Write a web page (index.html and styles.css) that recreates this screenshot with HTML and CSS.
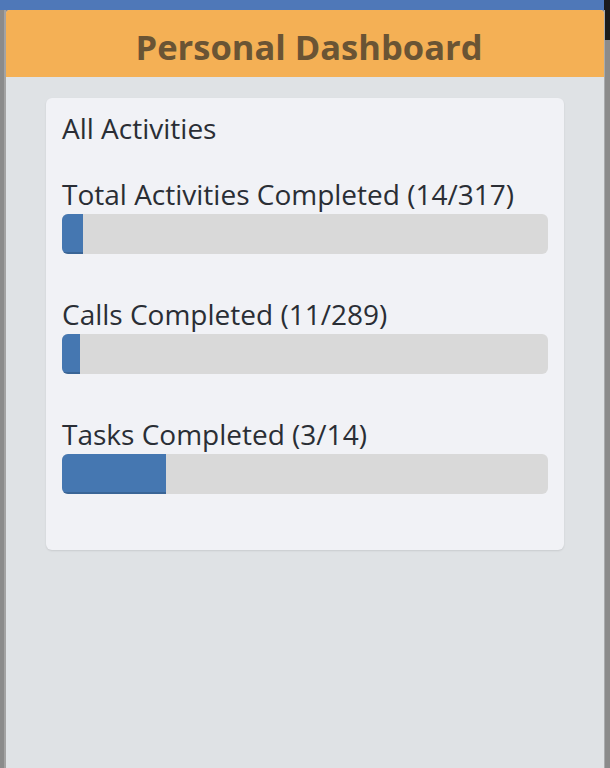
FILE: index.html
```html
<!DOCTYPE html>
<html>
<head>
<meta charset="utf-8">
<link rel="stylesheet" href="styles.css">
</head>
<body>
<div class="topbar"><div class="topbar-blue"></div><div class="topbar-dark"></div></div>
<div class="frame">
  <div class="side-left"></div>
  <main class="panel">
    <header class="header">Personal Dashboard</header>
    <section class="content">
      <div class="card">
        <div class="card-title">All Activities</div>
        <div class="metric">
          <div class="metric-label">Total Activities Completed (14/317)</div>
          <div class="track"><div class="fill" style="width: 4.4%"></div></div>
        </div>
        <div class="metric">
          <div class="metric-label">Calls Completed (11/289)</div>
          <div class="track"><div class="fill" style="width: 3.8%"></div></div>
        </div>
        <div class="metric">
          <div class="metric-label">Tasks Completed (3/14)</div>
          <div class="track"><div class="fill" style="width: 21.4%"></div></div>
        </div>
      </div>
    </section>
  </main>
  <div class="side-right"><div class="side-right-dark"></div></div>
</div>
</body>
</html>
```
FILE: styles.css
```css
html, body {
  margin: 0;
  padding: 0;
  height: 100%;
}
body {
  font-family: "Open Sans", "Noto Sans", sans-serif;
  background: #8b8b8b;
  display: flex;
  flex-direction: column;
  overflow: hidden;
}
.topbar {
  display: flex;
  height: 10px;
  flex: none;
}
.topbar-blue {
  flex: 1;
  background: #4f78b8;
}
.topbar-dark {
  width: 6px;
  background: #1b1b1b;
}
.frame {
  flex: 1;
  display: flex;
}
.side-left {
  width: 4px;
  background: #8b8b8b;
  border-right: 2px solid #a3a3a3;
}
.side-right {
  width: 6px;
  background: #8b8b8b;
  border-left: 1px solid #a9abad;
  box-sizing: border-box;
}
.side-right-dark {
  height: 30px;
  background: #1b1b1b;
}
.panel {
  flex: 1;
  background: #dfe2e5;
  border-top-left-radius: 4px;
  border-top-right-radius: 4px;
  overflow: hidden;
}
.header {
  background: #f4b055;
  color: #6a5434;
  font-weight: 700;
  font-size: 34.5px;
  line-height: 46px;
  padding: 14px 0 7px 8px;
  text-align: center;
}
.content {
  padding: 21px 40px;
}
.card {
  background: #f1f2f6;
  border-radius: 6px;
  box-shadow: 0 1px 2px rgba(0, 0, 0, 0.1);
  padding: 11px 16px 56px;
  color: #2a2e35;
}
.card-title {
  font-size: 28px;
  line-height: 38px;
}
.metric {
  margin-top: 28px;
}
.metric + .metric {
  margin-top: 41px;
}
.metric-label {
  font-size: 28px;
  line-height: 38px;
  margin-bottom: 1px;
}
.track {
  height: 40px;
  background: #d9d9d9;
  border-radius: 6px;
  overflow: hidden;
}
.fill {
  height: 100%;
  background: #4577b1;
  box-shadow: inset 0 -2px 0 rgba(0, 0, 0, 0.15);
}
```
